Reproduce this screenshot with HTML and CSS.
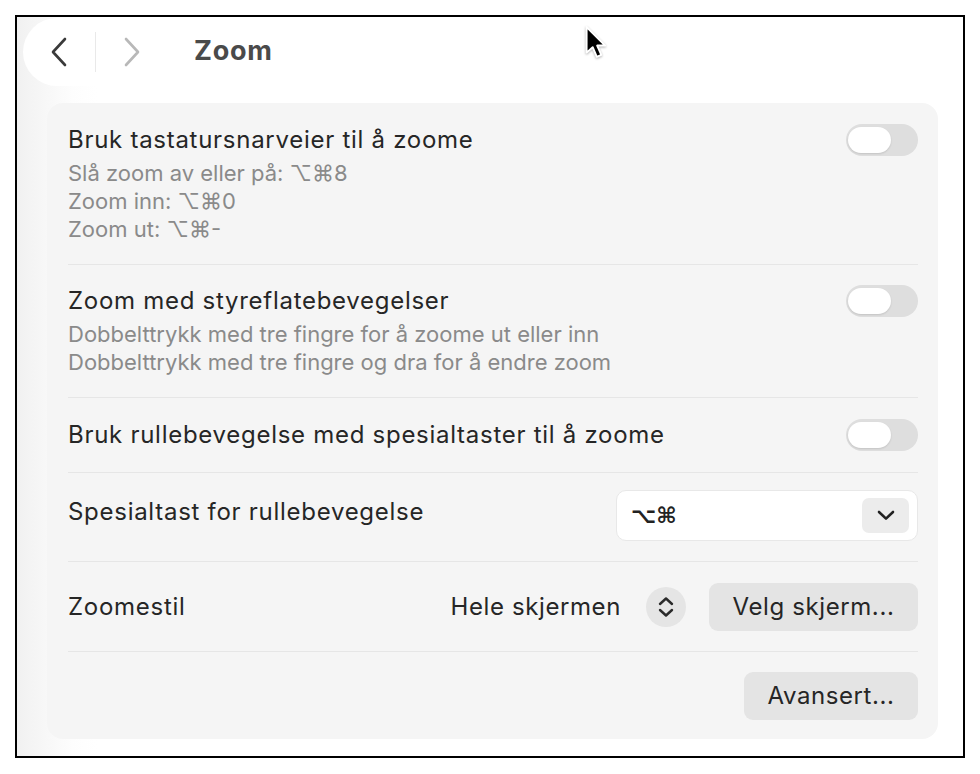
FILE: index.html
```html
<!DOCTYPE html>
<html lang="nb">
<head>
  <meta charset="UTF-8">
  <meta name="viewport" content="width=device-width, initial-scale=1.0">
  <title>Zoom</title>
  <link rel="stylesheet" href="styles.css">
</head>
<body>
  <div class="window">

    <!-- Toolbar -->
    <div class="toolbar">
      <div class="nav-pill">
        <button class="nav-btn" aria-label="Tilbake">
          <svg width="20" height="30" viewBox="0 0 20 30"><path d="M16 2 L4 15 L16 28" fill="none" stroke="#3a3a3a" stroke-width="2.6" stroke-linecap="round" stroke-linejoin="round"/></svg>
        </button>
        <span class="nav-divider"></span>
        <button class="nav-btn" aria-label="Fremover">
          <svg width="20" height="30" viewBox="0 0 20 30"><path d="M4 2 L16 15 L4 28" fill="none" stroke="#b8b8b8" stroke-width="2.6" stroke-linecap="round" stroke-linejoin="round"/></svg>
        </button>
      </div>
      <h1 class="title">Zoom</h1>
    </div>

    <!-- Settings group -->
    <div class="group">
      <div class="row row-top">
        <div class="row-text">
          <div class="label">Bruk tastatursnarveier til å zoome</div>
          <div class="sub">Slå zoom av eller på: ⌥⌘8</div>
          <div class="sub">Zoom inn: ⌥⌘0</div>
          <div class="sub">Zoom ut: ⌥⌘-</div>
        </div>
        <span class="toggle"><span class="knob"></span></span>
      </div>

      <div class="row row-top">
        <div class="row-text">
          <div class="label">Zoom med styreflatebevegelser</div>
          <div class="sub">Dobbelttrykk med tre fingre for å zoome ut eller inn</div>
          <div class="sub">Dobbelttrykk med tre fingre og dra for å endre zoom</div>
        </div>
        <span class="toggle"><span class="knob"></span></span>
      </div>

      <div class="row row-single">
        <div class="label">Bruk rullebevegelse med spesialtaster til å zoome</div>
        <span class="toggle"><span class="knob"></span></span>
      </div>

      <div class="row row-mid">
        <div class="label label-raised">Spesialtast for rullebevegelse</div>
        <div class="select">
          <span class="select-value">⌥⌘</span>
          <span class="select-arrow">
            <svg width="18" height="11" viewBox="0 0 18 11"><path d="M2 2 L9 8.6 L16 2" fill="none" stroke="#222" stroke-width="2.6" stroke-linecap="round" stroke-linejoin="round"/></svg>
          </span>
        </div>
      </div>

      <div class="row row-mid row-tall">
        <div class="label">Zoomestil</div>
        <div class="controls">
          <span class="value">Hele skjermen</span>
          <span class="stepper">
            <svg width="16" height="22" viewBox="0 0 16 22"><path d="M2 8 L8 2.5 L14 8 M2 14 L8 19.5 L14 14" fill="none" stroke="#2a2a2a" stroke-width="2.4" stroke-linecap="round" stroke-linejoin="round"/></svg>
          </span>
          <button class="btn btn-wide">Velg skjerm...</button>
        </div>
      </div>

      <div class="row row-end">
        <button class="btn">Avansert...</button>
      </div>
    </div>

    <!-- Mouse pointer -->
    <svg class="pointer" width="24" height="36" viewBox="0 0 15 22">
      <path d="M1 1 L1 17 L4.8 13.6 L7.4 19.6 L10.2 18.4 L7.6 12.6 L12.6 12.6 Z" fill="#000" stroke="#fff" stroke-width="1.2" stroke-linejoin="round"/>
    </svg>
  </div>
</body>
</html>
```

FILE: styles.css
```css
body {
  margin: 0;
  background: #fff;
  font-family: Inter, "Noto Sans", "DejaVu Sans", sans-serif;
  color: #262626;
}
.window {
  position: relative;
  box-sizing: border-box;
  width: 950px;
  height: 743px;
  margin: 15px 0 0 15px;
  border: 2px solid #000;
  background: linear-gradient(90deg, #f1f1f1 0, #fdfdfd 55px, #fff 80px);
  padding: 0 25px 17px 30px;
  display: flex;
  flex-direction: column;
}
.toolbar {
  display: flex;
  align-items: flex-start;
  height: 86px;
  margin-left: -24px;
}
.nav-pill {
  display: flex;
  align-items: center;
  width: 145px;
  height: 68px;
  margin-top: 1px;
  background: #fff;
  border-radius: 34px;
}
.nav-btn {
  border: none;
  background: none;
  padding: 0;
  width: 72px;
  display: flex;
  justify-content: center;
  align-items: center;
}
.nav-divider {
  width: 1px;
  height: 40px;
  background: #e9e9e9;
}
.title {
  margin: 0 0 0 26px;
  font-size: 27px;
  line-height: 68px;
  letter-spacing: 0.7px;
  font-weight: 700;
  color: #4a4a4a;
}
.group {
  flex: 1;
  display: flex;
  flex-direction: column;
  background: #f5f5f5;
  border-radius: 16px;
  padding: 0 20px 0 21px;
}
.row {
  display: flex;
  justify-content: space-between;
  border-top: 1px solid #e6e6e6;
  flex-shrink: 0;
}
.row:first-child {
  border-top: none;
}
.row-top {
  align-items: flex-start;
  padding: 22px 0 21px;
}
.row:first-child.row-top {
  padding-top: 23px;
}
.row-top .label {
  margin-bottom: 5px;
}
.row-single {
  align-items: center;
  height: 74px;
}
.row-mid {
  align-items: center;
  height: 88px;
}
.row-tall {
  height: 89px;
}
.row-end {
  justify-content: flex-end;
  align-items: center;
  flex: 1;
}
.label {
  font-size: 24px;
  line-height: 28px;
  letter-spacing: 0.72px;
  color: #262626;
}
.label-raised {
  margin-bottom: 10px;
}
.sub {
  font-size: 22px;
  line-height: 28px;
  color: #8a8a8a;
}
.toggle {
  width: 72px;
  height: 32px;
  margin-top: -2px;
  border-radius: 16px;
  background: #dedede;
  position: relative;
  flex-shrink: 0;
}
.knob {
  position: absolute;
  left: 2px;
  top: 3px;
  width: 43px;
  height: 26px;
  border-radius: 13px;
  background: #fff;
  box-shadow: 0 1px 2px rgba(0, 0, 0, 0.12);
}
.row-single .toggle {
  margin-top: 0;
}
.select {
  box-sizing: border-box;
  width: 302px;
  height: 51px;
  margin-bottom: 3px;
  background: #fff;
  border: 1px solid #e8e8e8;
  border-radius: 10px;
  display: flex;
  align-items: center;
  justify-content: space-between;
  padding: 0 8px 0 14px;
}
.select-value {
  font-family: "DejaVu Sans", sans-serif;
  font-size: 22px;
  font-weight: 700;
  color: #222;
}
.select-arrow {
  width: 47px;
  height: 35px;
  border-radius: 7px;
  background: #ececec;
  display: flex;
  align-items: center;
  justify-content: center;
}
.controls {
  display: flex;
  align-items: center;
}
.value {
  font-size: 24px;
  letter-spacing: 0.6px;
  color: #262626;
}
.stepper {
  width: 40px;
  height: 40px;
  border-radius: 50%;
  background: #e5e5e5;
  display: flex;
  align-items: center;
  justify-content: center;
  margin: 0 23px 0 25px;
}
.btn {
  font-family: inherit;
  font-size: 24px;
  letter-spacing: 0.6px;
  color: #262626;
  background: #e4e4e4;
  border: none;
  border-radius: 9px;
  height: 48px;
  width: 174px;
  padding: 0;
}
.btn-wide {
  width: 209px;
}
.pointer {
  position: absolute;
  left: 568px;
  top: 8px;
  filter: drop-shadow(0 1px 1px rgba(0, 0, 0, 0.3));
}
```
